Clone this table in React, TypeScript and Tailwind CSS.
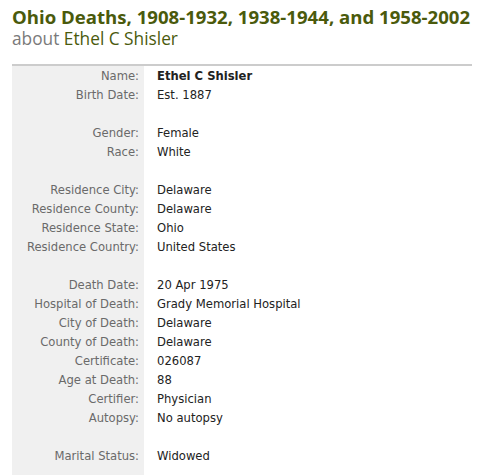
// Record detail page: title block and a two-column facts table
const rows: [string, string][] = [
  ["Name:", "Ethel C Shisler"],
  ["Birth Date:", "Est. 1887"],
  ["", ""],
  ["Gender:", "Female"],
  ["Race:", "White"],
  ["", ""],
  ["Residence City:", "Delaware"],
  ["Residence County:", "Delaware"],
  ["Residence State:", "Ohio"],
  ["Residence Country:", "United States"],
  ["", ""],
  ["Death Date:", "20 Apr 1975"],
  ["Hospital of Death:", "Grady Memorial Hospital"],
  ["City of Death:", "Delaware"],
  ["County of Death:", "Delaware"],
  ["Certificate:", "026087"],
  ["Age at Death:", "88"],
  ["Certifier:", "Physician"],
  ["Autopsy:", "No autopsy"],
  ["", ""],
  ["Marital Status:", "Widowed"],
  ["", ""],
];

const App = () => {
  return (
    <div className="min-h-screen bg-white px-3 pt-[6px]">
      {/* Heading */}
      <h1 className="text-[18.6px] leading-[22px] font-bold text-[#4a5a0c] font-['Open_Sans',sans-serif] whitespace-nowrap">
        Ohio Deaths, 1908-1932, 1938-1944, and 1958-2002
      </h1>
      <div className="text-[17.3px] leading-[22px] font-['Open_Sans',sans-serif] text-[#7a7a7a]">
        about <span className="text-[#4a5a0c]">Ethel C Shisler</span>
      </div>

      {/* Facts table */}
      <div className="mt-[14px] w-[460px] border-t-2 border-[#cccccc] grid grid-cols-[132px_1fr] font-['DejaVu_Sans',sans-serif] text-[11.6px]">
        <div className="h-[1px] bg-[#f0f0f0]" />
        <div className="h-[1px]" />
        {rows.map(([label, value], i) => (
          <div key={i} className="contents">
            <div className="h-[19px] bg-[#f0f0f0] pr-[5px] text-right text-[#6a6a6a] leading-[19px] whitespace-nowrap">
              {label}
            </div>
            <div className={`h-[19px] pl-[13px] leading-[19px] whitespace-nowrap text-[#222] ${i === 0 ? "font-bold" : ""}`}>
              {value}
            </div>
          </div>
        ))}
      </div>
    </div>
  );
};

export default App;
